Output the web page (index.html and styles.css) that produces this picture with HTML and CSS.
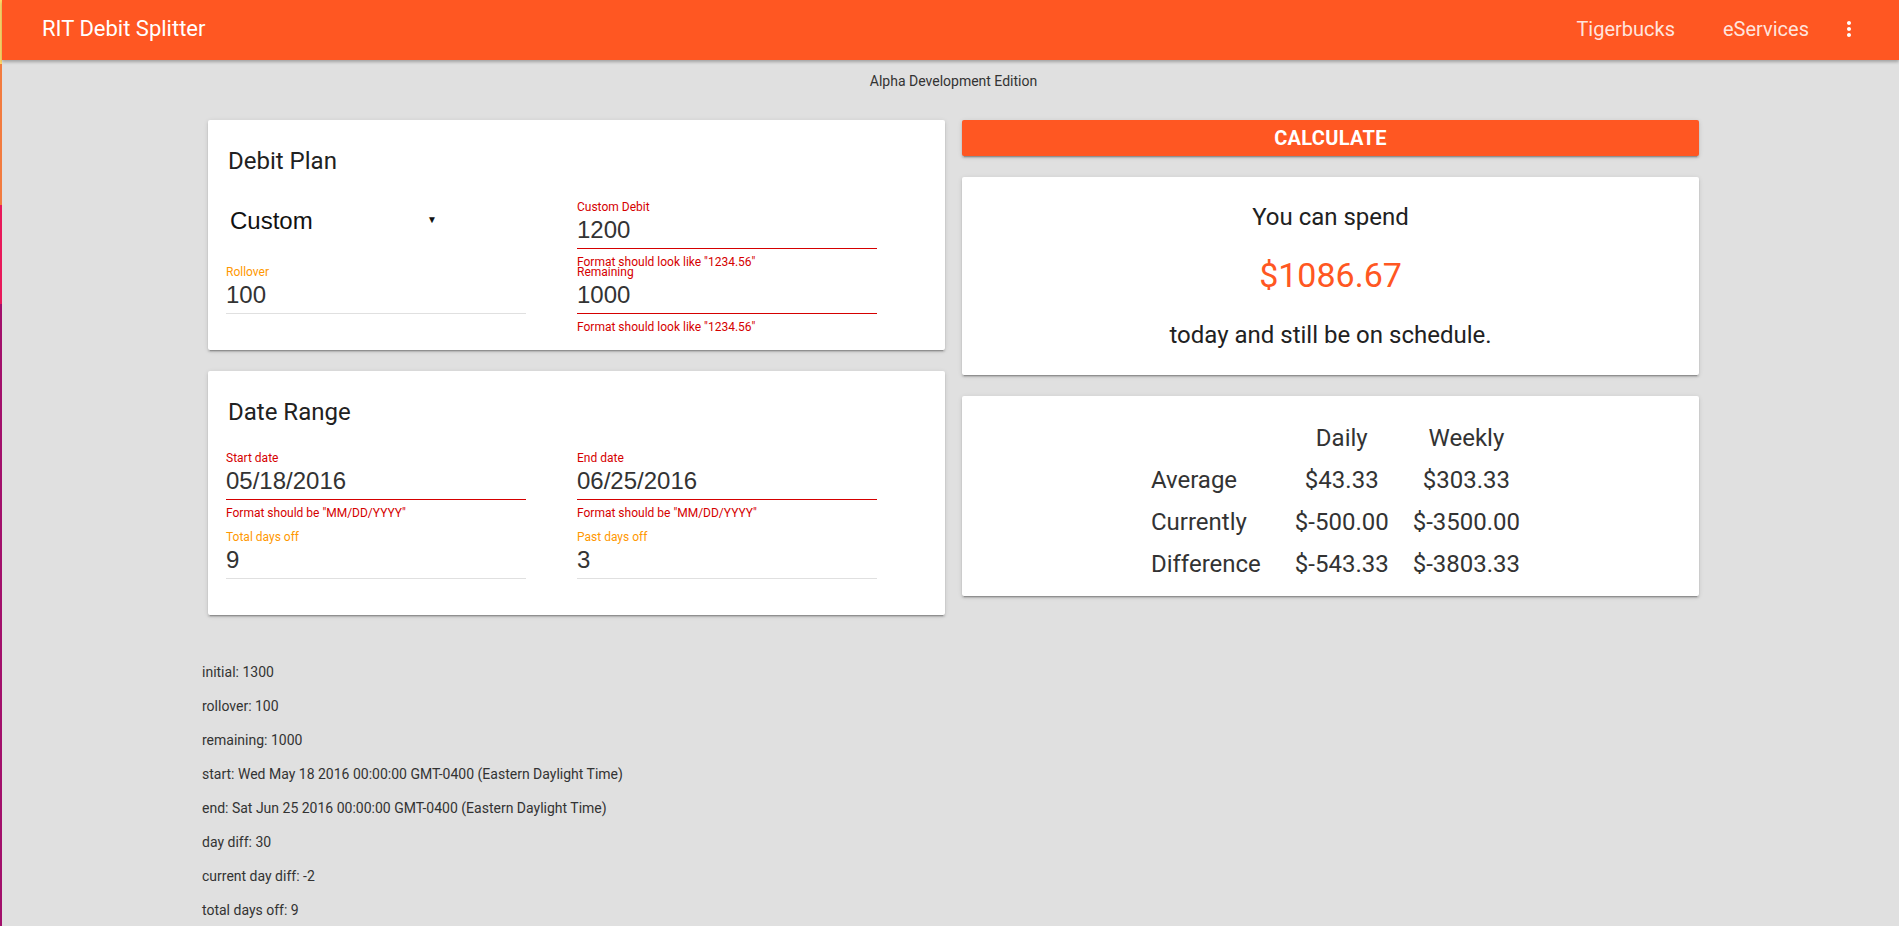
FILE: index.html
```html
<!DOCTYPE html>
<html lang="en">
<head>
<meta charset="utf-8">
<title>RIT Debit Splitter</title>
<link rel="stylesheet" href="styles.css">
</head>
<body>
<div class="edge-strip"></div>
<div class="app">
  <header class="topbar">
    <span class="brand">RIT Debit Splitter</span>
    <nav class="nav">
      <a class="nav-link" href="#">Tigerbucks</a>
      <a class="nav-link" href="#">eServices</a>
      <span class="kebab" aria-label="more">
        <svg viewBox="0 0 24 24" width="24" height="24"><path fill="#fff" d="M12 8c1.1 0 2-.9 2-2s-.9-2-2-2-2 .9-2 2 .9 2 2 2zm0 2c-1.1 0-2 .9-2 2s.9 2 2 2 2-.9 2-2-.9-2-2-2zm0 6c-1.1 0-2 .9-2 2s.9 2 2 2 2-.9 2-2-.9-2-2-2z"/></svg>
      </span>
    </nav>
  </header>

  <div class="edition">Alpha Development Edition</div>

  <main class="page">
    <div class="cols">
      <div class="col">
        <section class="card form-card">
          <h2 class="card-title">Debit Plan</h2>
          <div class="fields">
            <div class="select-cell">
              <div class="select"><span>Custom</span><span class="caret">&#9660;</span></div>
            </div>
            <div class="field invalid">
              <span class="label">Custom Debit</span>
              <div class="value">1200</div>
              <span class="error">Format should look like "1234.56"</span>
            </div>
            <div class="field">
              <span class="label">Rollover</span>
              <div class="value">100</div>
            </div>
            <div class="field invalid">
              <span class="label">Remaining</span>
              <div class="value">1000</div>
              <span class="error">Format should look like "1234.56"</span>
            </div>
          </div>
        </section>

        <section class="card form-card">
          <h2 class="card-title">Date Range</h2>
          <div class="fields fields-spaced">
            <div class="field invalid">
              <span class="label">Start date</span>
              <div class="value">05/18/2016</div>
              <span class="error">Format should be "MM/DD/YYYY"</span>
            </div>
            <div class="field invalid">
              <span class="label">End date</span>
              <div class="value">06/25/2016</div>
              <span class="error">Format should be "MM/DD/YYYY"</span>
            </div>
            <div class="field">
              <span class="label">Total days off</span>
              <div class="value">9</div>
            </div>
            <div class="field">
              <span class="label">Past days off</span>
              <div class="value">3</div>
            </div>
          </div>
        </section>
      </div>

      <div class="col">
        <button class="calc-btn" type="button">CALCULATE</button>

        <section class="card result-card">
          <div class="result-line">You can spend</div>
          <div class="result-amount">$1086.67</div>
          <div class="result-line">today and still be on schedule.</div>
        </section>

        <section class="card table-card">
          <table class="stats">
            <thead>
              <tr><th></th><th>Daily</th><th>Weekly</th></tr>
            </thead>
            <tbody>
              <tr><td>Average</td><td>$43.33</td><td>$303.33</td></tr>
              <tr><td>Currently</td><td>$-500.00</td><td>$-3500.00</td></tr>
              <tr><td>Difference</td><td>$-543.33</td><td>$-3803.33</td></tr>
            </tbody>
          </table>
        </section>
      </div>
    </div>

    <div class="debug">
      <p>initial: 1300</p>
      <p>rollover: 100</p>
      <p>remaining: 1000</p>
      <p>start: Wed May 18 2016 00:00:00 GMT-0400 (Eastern Daylight Time)</p>
      <p>end: Sat Jun 25 2016 00:00:00 GMT-0400 (Eastern Daylight Time)</p>
      <p>day diff: 30</p>
      <p>current day diff: -2</p>
      <p>total days off: 9</p>
    </div>
  </main>
</div>
</body>
</html>
```

FILE: styles.css
```css
html, body {
  margin: 0;
  padding: 0;
  height: 100%;
  overflow: hidden;
}

body {
  display: flex;
  background: #e0e0e0;
  font-family: Roboto, "Noto Sans", sans-serif;
  color: #212121;
}

.edge-strip {
  flex: 0 0 2px;
  min-height: 100vh;
  background: linear-gradient(to bottom,
    #ffd96a 0, #ffd96a 64px,
    #f27b3f 64px, #f27b3f 205px,
    #e8195a 205px, #e8195a 304px,
    #a2106b 304px, #a2106b 100%);
}

.app {
  flex: 1;
  min-width: 0;
}

.topbar {
  height: 60px;
  background: #ff5722;
  display: flex;
  align-items: center;
  padding: 0 34px 0 40px;
  box-shadow: 0 2px 3px rgba(0, 0, 0, 0.28);
  position: relative;
}

.brand {
  color: #fff;
  font-size: 22px;
  line-height: 26px;
  margin-top: -2px;
}

.nav {
  margin-left: auto;
  display: flex;
  align-items: center;
  margin-top: -2px;
}

.nav-link {
  color: rgba(255, 255, 255, 0.86);
  text-decoration: none;
  font-size: 20px;
  line-height: 24px;
  padding: 0 24px;
}

.kebab {
  width: 32px;
  height: 24px;
  display: flex;
  justify-content: center;
  align-items: center;
}

.edition {
  text-align: center;
  font-size: 14px;
  line-height: 16px;
  color: #333;
  padding-top: 13px;
  margin-bottom: 31px;
  padding-left: 6px;
}

.page {
  margin-left: 200px;
}

.cols {
  display: grid;
  grid-template-columns: 737px 737px;
  column-gap: 17px;
  margin-left: 6px;
  align-items: start;
}

.col {
  display: flex;
  flex-direction: column;
  gap: 21px;
}

.card {
  background: #fff;
  border-radius: 2px;
  box-shadow: 0 2px 2px 0 rgba(0, 0, 0, 0.14), 0 3px 1px -2px rgba(0, 0, 0, 0.2), 0 1px 5px 0 rgba(0, 0, 0, 0.12);
}

.form-card {
  padding: 27px 18px 20px;
}

.card-title {
  margin: 0 0 25px;
  padding-left: 2px;
  font-size: 24px;
  line-height: 28px;
  font-weight: 400;
  color: #212121;
}

.fields {
  display: grid;
  grid-template-columns: 300px 300px;
  column-gap: 51px;
}

.fields-spaced {
  row-gap: 14px;
}

.field {
  position: relative;
  padding: 16px 0 16px;
}

.label {
  position: absolute;
  top: 0;
  left: 0;
  font-size: 12px;
  line-height: 14px;
  color: #ff9800;
}

.value {
  height: 28px;
  line-height: 28px;
  padding-bottom: 4px;
  font-family: "Liberation Sans", Arial, sans-serif;
  font-size: 24px;
  color: #333;
  border-bottom: 1px solid rgba(0, 0, 0, 0.12);
}

.error {
  position: absolute;
  top: 55px;
  left: 0;
  font-size: 12px;
  line-height: 14px;
  color: #d50000;
  white-space: nowrap;
}

.field.invalid .label {
  color: #d50000;
}

.field.invalid .value {
  border-bottom-color: #d50000;
}

.select-cell {
  padding-top: 6px;
}

.select {
  width: 211px;
  height: 30px;
  padding-left: 4px;
  display: flex;
  align-items: center;
  justify-content: space-between;
  font-family: "Liberation Sans", Arial, sans-serif;
  font-size: 24px;
  color: #111;
}

.caret {
  font-size: 10px;
  line-height: 10px;
  margin-right: 4px;
  margin-top: -3px;
  color: #111;
}

.calc-btn {
  height: 36px;
  border: none;
  border-radius: 2px;
  background: #ff5722;
  color: #fff;
  font-family: Roboto, sans-serif;
  font-weight: 700;
  font-size: 20px;
  letter-spacing: 0.3px;
  padding: 0;
  box-shadow: 0 2px 2px 0 rgba(0, 0, 0, 0.14), 0 3px 1px -2px rgba(0, 0, 0, 0.2), 0 1px 5px 0 rgba(0, 0, 0, 0.12);
}

.result-card {
  padding: 26px 0;
  text-align: center;
  display: flex;
  flex-direction: column;
  gap: 24px;
}

.result-line {
  font-size: 24px;
  line-height: 28px;
  color: #212121;
}

.result-amount {
  font-size: 34px;
  line-height: 40px;
  color: #ff5722;
  margin-bottom: 2px;
}

.table-card {
  padding: 21px 0 11px 10px;
}

.stats {
  margin: 0 auto;
  border-collapse: collapse;
  font-size: 24px;
  line-height: 28px;
  color: #333;
}

.stats th {
  font-weight: 400;
  padding: 7px 12px;
  text-align: center;
}

.stats td {
  padding: 7px 12px;
  text-align: center;
}

.stats td:first-child,
.stats th:first-child {
  text-align: left;
  padding-right: 22px;
}

.debug {
  padding-top: 33px;
}

.debug p {
  margin: 14px 0;
  font-size: 14px;
  line-height: 20px;
  color: #333;
}
```
